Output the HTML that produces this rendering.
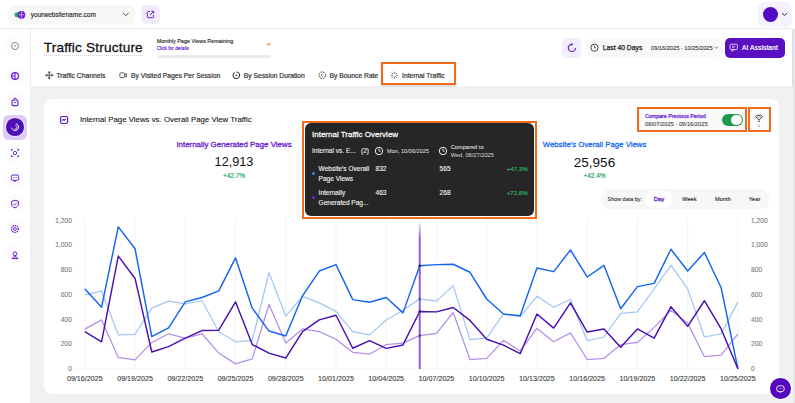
<!DOCTYPE html>
<html><head><meta charset="utf-8">
<style>
*{margin:0;padding:0;box-sizing:border-box}
html,body{width:795px;height:403px;overflow:hidden;background:#fff;font-family:"Liberation Sans",sans-serif;color:#1d1d1f}
.a{position:absolute}
.t{position:absolute;white-space:nowrap;line-height:1}
svg{position:absolute;overflow:visible}
</style></head><body>
<!-- top bar -->
<div class="a" style="left:0;top:28;"></div>
<div class="a" style="left:0;top:28.4px;width:792px;height:1px;background:#ebebeb"></div>
<div class="a" style="left:8px;top:5px;width:127px;height:20px;background:#f7f7f7;border-radius:6px"></div>
<svg style="left:0;top:0" width="40" height="30"><circle cx="17" cy="14.8" r="2.5" fill="#27b35a"/><circle cx="21.4" cy="14.8" r="3.9" fill="#6a1fd0"/><path d="M21.4 11.5v6.6M18.6 14.8h5.6" stroke="#fff" stroke-width="0.55"/></svg>
<div class="t" style="left:30.8px;top:12px;font-size:6.5px;color:#222;-webkit-text-stroke:0.12px #222">yourwebsitename.com</div>
<svg style="left:122px;top:12px" width="8" height="5"><path d="M1 1l2.8 2.6L6.6 1" fill="none" stroke="#444" stroke-width="0.9"/></svg>
<div class="a" style="left:140.5px;top:5px;width:19px;height:19px;background:#f2ecfc;border-radius:5px"></div>
<svg style="left:146px;top:10px" width="9" height="9"><path d="M4 1.5H2.2a.9.9 0 0 0-.9.9v4.4a.9.9 0 0 0 .9.9h4.4a.9.9 0 0 0 .9-.9V5" fill="none" stroke="#6a1fd0" stroke-width="1"/><path d="M4 5L7.6 1.4M5.4 1.2h2.4v2.4" fill="none" stroke="#6a1fd0" stroke-width="1"/></svg>
<div class="a" style="left:758px;top:2px;width:34px;height:25px;background:#f6f2fd;border-radius:6px"></div>
<div class="a" style="left:762.6px;top:6.7px;width:15.4px;height:15.4px;border-radius:50%;background:#540bc2"></div>
<svg style="left:781px;top:12px" width="8" height="5"><path d="M1 1l2.6 2.4L6.2 1" fill="none" stroke="#333" stroke-width="1"/></svg>
<!-- right strip -->
<div class="a" style="left:792px;top:29px;width:3px;height:374px;background:#e6e6e6;border-left:1px solid #dcdcdc"></div>
<!-- sidebar -->
<div class="a" style="left:29.6px;top:29px;width:1px;height:374px;background:#ededed"></div>
<div class="a" style="left:30.6px;top:86.2px;width:762px;height:317px;background:#f1f1f1"></div>
<div class="a" style="left:5.2px;top:36.7px;width:19.4px;height:19.4px;border-radius:50%;background:#fcfcfc"></div>
<div class="a" style="left:5.2px;top:66.4px;width:19.4px;height:19.4px;border-radius:50%;background:#fcfcfc"></div>
<div class="a" style="left:5.2px;top:92.2px;width:19.4px;height:19.4px;border-radius:50%;background:#fcfcfc"></div>
<div class="a" style="left:3.1px;top:114.6px;width:24px;height:25px;border-radius:6px;background:#dccbf6"></div>
<div class="a" style="left:5.2px;top:117.2px;width:19.8px;height:19.8px;border-radius:50%;background:#eee5fb"></div>
<div class="a" style="left:6.3px;top:118.3px;width:17.6px;height:17.6px;border-radius:50%;background:#5010b8"></div>
<svg style="left:9.6px;top:121.6px" width="11" height="11"><path d="M6.2 1.8c1.6.5 2.6 2 2.4 3.7-.3 2-2.2 3.3-4.1 3-1.4-.2-2.4-1.2-2.7-2.4M5.8 3.6c.9.3 1.4 1.2 1.2 2.1-.2 1-1.2 1.6-2.2 1.4" fill="none" stroke="#fff" stroke-width="0.95" stroke-linecap="round"/></svg>
<div class="a" style="left:5.2px;top:143.3px;width:19.4px;height:19.4px;border-radius:50%;background:#fcfcfc"></div>
<div class="a" style="left:5.2px;top:168.3px;width:19.4px;height:19.4px;border-radius:50%;background:#fcfcfc"></div>
<div class="a" style="left:5.2px;top:193.8px;width:19.4px;height:19.4px;border-radius:50%;background:#fcfcfc"></div>
<div class="a" style="left:5.2px;top:219.3px;width:19.4px;height:19.4px;border-radius:50%;background:#fcfcfc"></div>
<div class="a" style="left:5.2px;top:244.8px;width:19.4px;height:19.4px;border-radius:50%;background:#fcfcfc"></div>
<svg style="left:9.9px;top:41.4px" width="10" height="10"><circle cx="5" cy="5" r="3.5" fill="none" stroke="#8a8a8a" stroke-width="1"/><path d="M4.6 3.8l1.4 1.2-1.4 1.2z" fill="#777"/></svg>
<svg style="left:9.9px;top:71.1px" width="10" height="10"><circle cx="5" cy="5" r="3.4" fill="none" stroke="#6a1fd0" stroke-width="1.25"/><path d="M5 1.6v6.8M1.6 5H5" stroke="#6a1fd0" stroke-width="1.1"/></svg>
<svg style="left:9.9px;top:96.9px" width="10" height="10"><rect x="2" y="3" width="6" height="5.6" rx="1.3" fill="none" stroke="#6a1fd0" stroke-width="1.1"/><path d="M3.6 3V2.5a1.4 1.4 0 0 1 2.8 0V3M3.5 5l1.5 1 1.5-1" fill="none" stroke="#6a1fd0" stroke-width="0.9"/></svg>
<svg style="left:9.9px;top:148.0px" width="10" height="10"><path d="M1.4 3V1.4H3M7 1.4h1.6V3M8.6 7v1.6H7M3 8.6H1.4V7" fill="none" stroke="#6a1fd0" stroke-width="0.9"/><circle cx="5" cy="5" r="1.7" fill="none" stroke="#6a1fd0" stroke-width="0.9"/></svg>
<svg style="left:9.9px;top:173.0px" width="10" height="10"><rect x="1.3" y="2" width="7.4" height="5.4" rx="1.6" fill="none" stroke="#6a1fd0" stroke-width="1"/><path d="M4.2 7.4l.8 1.4.8-1.4" fill="none" stroke="#6a1fd0" stroke-width="0.9"/><path d="M3.4 4.7h.01M5 4.7h.01M6.6 4.7h.01" stroke="#6a1fd0" stroke-width="0.9" stroke-linecap="round"/></svg>
<svg style="left:9.9px;top:198.5px" width="10" height="10"><path d="M5 1.2l3.4 1.3v2.4c0 2-1.6 3.4-3.4 4-1.8-.6-3.4-2-3.4-4V2.5z" fill="none" stroke="#6a1fd0" stroke-width="1"/><path d="M3.5 5l1.1 1.1 2-2" fill="none" stroke="#6a1fd0" stroke-width="0.9"/></svg>
<svg style="left:9.9px;top:224.0px" width="10" height="10"><circle cx="5" cy="5" r="3.4" fill="none" stroke="#6a1fd0" stroke-width="1.3" stroke-dasharray="1.4 .8"/><circle cx="5" cy="5" r="1.4" fill="none" stroke="#6a1fd0" stroke-width="0.9"/></svg>
<svg style="left:9.9px;top:249.5px" width="10" height="10"><circle cx="5" cy="3.8" r="1.9" fill="none" stroke="#6a1fd0" stroke-width="1"/><path d="M5 5.7v1M2 8.6c.6-1.2 1.7-1.8 3-1.8s2.4.6 3 1.8z" fill="none" stroke="#6a1fd0" stroke-width="1"/></svg>
<!-- header -->
<div class="t" style="left:43.7px;top:41.2px;font-size:13.6px;letter-spacing:0.19px;color:#111;-webkit-text-stroke:0.28px #111">Traffic Structure</div>
<div class="a" style="left:43.5px;top:55.2px;width:99px;height:0;border-top:0.8px dotted #cfcfcf"></div>

<div class="t" style="left:156.7px;top:39.1px;font-size:5.45px;color:#222;-webkit-text-stroke:0.12px #222">Monthly Page Views Remaining</div>
<div class="t" style="left:156.7px;top:46.7px;font-size:4.75px;color:#6a1fd0;-webkit-text-stroke:0.15px #6a1fd0">Click for details</div>
<div class="t" style="left:266.4px;top:41.2px;font-size:6px;font-weight:bold;color:#f07a2a">∞</div>
<div class="a" style="left:157px;top:55px;width:114px;height:3px;background:#ebebeb;border-radius:2px"></div>
<!-- right header -->
<div class="a" style="left:562.4px;top:38px;width:19px;height:19.7px;background:#f3eefc;border-radius:5px"></div>
<svg style="left:566px;top:42px" width="12" height="12"><path d="M5.9 2.3A3.6 3.6 0 1 0 9.5 5.9" fill="none" stroke="#6a1fd0" stroke-width="1.2"/><path d="M5.4 0.9L7.3 2.3 5.4 3.7z" fill="#6a1fd0"/></svg>
<div class="a" style="left:587px;top:38px;width:135px;height:19px;background:#f8f8f8;border-radius:5px"></div>
<svg style="left:589px;top:42px" width="11" height="11"><circle cx="5.5" cy="5.7" r="3.6" fill="none" stroke="#333" stroke-width="0.9"/><path d="M5.5 3.8v2h1.5" fill="none" stroke="#333" stroke-width="0.8"/></svg>
<div class="t" style="left:602.7px;top:45.2px;font-size:6.8px;color:#222;-webkit-text-stroke:0.25px #222">Last 40 Days</div>
<div class="t" style="left:651px;top:45.8px;font-size:5.66px;color:#333;-webkit-text-stroke:0.1px #333">09/16/2025 - 10/25/2025</div>
<svg style="left:714px;top:46px" width="5" height="4"><path d="M.6 .8l1.7 1.6L4 .8" fill="none" stroke="#555" stroke-width="0.7"/></svg>
<div class="a" style="left:725px;top:38px;width:60px;height:20px;background:#5a0fc0;border-radius:5px"></div>
<svg style="left:729px;top:43px" width="10" height="10"><rect x="1" y="1.2" width="7.4" height="5.4" rx="1.2" fill="none" stroke="#e6dcfb" stroke-width="0.9"/><path d="M3 3.3h3.4M3 4.7h2.4" stroke="#e6dcfb" stroke-width="0.7"/><path d="M3.4 6.6l-.4 2 2-2" fill="none" stroke="#e6dcfb" stroke-width="0.8"/></svg>
<div class="t" style="left:742px;top:45.3px;font-size:6.6px;letter-spacing:0.12px;color:#fff;-webkit-text-stroke:0.2px #fff">AI Assistant</div>
<!-- tabs -->
<svg style="left:44.5px;top:71.2px" width="8.5" height="8.5" viewBox="0 0 10 10"><path d="M5 1v8M1 5h8" stroke="#3a3a3a" stroke-width="0.9"/><circle cx="5" cy="1.8" r="1.1" fill="none" stroke="#3a3a3a" stroke-width="0.8"/><circle cx="5" cy="8.2" r="1.1" fill="none" stroke="#3a3a3a" stroke-width="0.8"/><circle cx="1.8" cy="5" r="1.1" fill="none" stroke="#3a3a3a" stroke-width="0.8"/><circle cx="8.2" cy="5" r="1.1" fill="none" stroke="#3a3a3a" stroke-width="0.8"/></svg>
<div class="t" style="left:56.5px;top:72.8px;font-size:6.75px;color:#333;-webkit-text-stroke:0.2px #333">Traffic Channels</div>
<svg style="left:118.8px;top:71.2px" width="8.5" height="8.5" viewBox="0 0 10 10"><rect x="1" y="2.2" width="5.6" height="5.6" rx="1" fill="none" stroke="#3a3a3a" stroke-width="0.9"/><path d="M6.6 4.2l2.2-1.2v4L6.6 5.8" fill="none" stroke="#3a3a3a" stroke-width="0.9"/></svg>
<div class="t" style="left:131px;top:72.8px;font-size:6.75px;color:#333;-webkit-text-stroke:0.2px #333">By Visited Pages Per Session</div>
<svg style="left:232.1px;top:71.2px" width="8.5" height="8.5" viewBox="0 0 10 10"><path d="M3.2 1.6A3.9 3.9 0 1 0 5 1.1" fill="none" stroke="#3a3a3a" stroke-width="1.25"/><path d="M4.2 3.4l2.2 1.6-2.2 1.6z" fill="#3a3a3a"/></svg>
<div class="t" style="left:243.7px;top:72.8px;font-size:6.75px;color:#333;-webkit-text-stroke:0.2px #333">By Session Duration</div>
<svg style="left:317.8px;top:71.2px" width="8.5" height="8.5" viewBox="0 0 10 10"><circle cx="5" cy="5" r="3.9" fill="none" stroke="#3a3a3a" stroke-width="1.1" stroke-dasharray="2.2 1"/><path d="M5.6 3.2L3.8 5l1.8 1.8" fill="none" stroke="#3a3a3a" stroke-width="1"/></svg>
<div class="t" style="left:329.5px;top:72.8px;font-size:6.75px;color:#333;-webkit-text-stroke:0.2px #333">By Bounce Rate</div>
<svg style="left:389.8px;top:71.2px" width="8.5" height="8.5" viewBox="0 0 10 10"><path d="M5 .8v2.4M5 6.8v2.4M.8 5h2.4M6.8 5h2.4M2 2l1.7 1.7M6.3 6.3L8 8M8 2L6.3 3.7M3.7 6.3L2 8" stroke="#444" stroke-width="0.9"/></svg>
<div class="t" style="left:402px;top:72.8px;font-size:6.75px;color:#333;-webkit-text-stroke:0.2px #333">Internal Traffic</div>
<div class="a" style="left:381.2px;top:62.2px;width:74.6px;height:22.6px;border:2.5px solid #f26a1b;box-shadow:0 1px 1.5px rgba(0,0,0,.2)"></div>
<!-- card -->
<div class="a" style="left:43.6px;top:99.4px;width:735px;height:294.6px;background:#fff;border-radius:8px"></div>
<div class="a" style="left:54.5px;top:110.5px;width:19px;height:19px;border-radius:50%;background:#fafafa"></div>
<svg style="left:58px;top:114px" width="12" height="14"><rect x="2.6" y="2.5" width="7" height="7" rx="1.5" fill="none" stroke="#5a14c8" stroke-width="1.15"/><path d="M4 6.6l1.3-1.2 1 .9 1.6-1.5" fill="none" stroke="#5a14c8" stroke-width="1.05"/><path d="M5.2 11.4l.9.7.9-.7" fill="none" stroke="#aaa" stroke-width="0.6"/></svg>
<div class="t" style="left:79.9px;top:115.9px;font-size:7.85px;color:#222;-webkit-text-stroke:0.12px #222">Internal Page Views vs. Overall Page View Traffic</div>
<div class="a" style="left:79.9px;top:123.6px;width:172px;height:0;border-top:0.7px dotted #dedede"></div>
<!-- KPIs -->
<div class="t" style="left:134px;width:200px;text-align:center;top:141.3px;font-size:7.9px;color:#6a1fd0;-webkit-text-stroke:0.3px #6a1fd0">Internally Generated Page Views</div>
<div class="t" style="left:134px;width:200px;text-align:center;top:156.4px;font-size:12.7px;color:#111">12,913</div>
<div class="t" style="left:134px;width:200px;text-align:center;top:172.9px;font-size:6.5px;color:#22a35a;-webkit-text-stroke:0.15px #22a35a">+42.7%</div>
<div class="t" style="left:494.5px;width:200px;text-align:center;top:141.3px;font-size:7.82px;color:#1f6ff0;-webkit-text-stroke:0.3px #1f6ff0">Website's Overall Page Views</div>
<div class="t" style="left:494.5px;width:200px;text-align:center;top:156.2px;font-size:13.5px;color:#111">25,956</div>
<div class="t" style="left:494.5px;width:200px;text-align:center;top:172.9px;font-size:6.5px;color:#22a35a;-webkit-text-stroke:0.15px #22a35a">+42.4%</div>
<!-- compare -->
<div class="a" style="left:637.2px;top:107.2px;width:109.8px;height:24.9px;border:2.5px solid #f26a1b;background:#f9f9f9"></div>
<div class="t" style="left:645px;top:113.9px;font-size:5.3px;-webkit-text-stroke:0.25px #6a1fd0;color:#6a1fd0">Compare Previous Period</div>
<div class="t" style="left:645px;top:121.9px;font-size:5.75px;color:#444;-webkit-text-stroke:0.1px #444">08/07/2025 - 09/16/2025</div>
<div class="a" style="left:721.6px;top:113.9px;width:21px;height:12.6px;border-radius:7px;background:#1e9a4c"></div>
<div class="a" style="left:731.2px;top:114.9px;width:10.6px;height:10.6px;border-radius:50%;background:#fff"></div>
<div class="a" style="left:748.3px;top:107.2px;width:22.5px;height:24.9px;border:2.5px solid #f26a1b;background:#fcfcfc"></div>
<svg style="left:752px;top:112.3px" width="14" height="18"><path d="M3.6 4.6C3.6 3.5 4.6 3.3 7 3.3S10.4 3.5 10.4 4.6L7.8 7.4H6.2Z" fill="none" stroke="#333" stroke-width="0.9" stroke-linejoin="round"/><path d="M5 5h4" stroke="#555" stroke-width="0.6"/><circle cx="7" cy="9.3" r="0.8" fill="#222"/><path d="M5.7 13.4l1.3 1 1.3-1" fill="none" stroke="#666" stroke-width="0.7"/></svg>
<!-- show data by -->
<div class="a" style="left:601.3px;top:189px;width:167.6px;height:19.8px;background:#f7f7f7;border-radius:8px"></div>
<div class="a" style="left:646px;top:190.5px;width:26px;height:17px;background:#fff;border-radius:7px"></div>
<div class="t" style="left:607.5px;top:197.1px;font-size:5.45px;color:#333;-webkit-text-stroke:0.1px #333">Show data by:</div>
<div class="t" style="left:639px;width:40px;text-align:center;top:197.1px;font-size:5.9px;color:#6a1fd0;-webkit-text-stroke:0.3px #6a1fd0">Day</div>
<div class="t" style="left:669.4px;width:40px;text-align:center;top:197.1px;font-size:5.7px;color:#333;-webkit-text-stroke:0.15px #333">Week</div>
<div class="t" style="left:702.9px;width:40px;text-align:center;top:197.1px;font-size:5.7px;color:#333;-webkit-text-stroke:0.15px #333">Month</div>
<div class="t" style="left:734.6px;width:40px;text-align:center;top:197.1px;font-size:5.7px;color:#333;-webkit-text-stroke:0.15px #333">Year</div>
<!-- chart -->
<svg style="left:0;top:0" width="795" height="403">
<g stroke="#ececec" stroke-width="0.7"><line x1="84.80" y1="218.5" x2="84.80" y2="369" /><line x1="135.04" y1="218.5" x2="135.04" y2="369" /><line x1="185.28" y1="218.5" x2="185.28" y2="369" /><line x1="235.52" y1="218.5" x2="235.52" y2="369" /><line x1="285.75" y1="218.5" x2="285.75" y2="369" /><line x1="335.99" y1="218.5" x2="335.99" y2="369" /><line x1="386.23" y1="218.5" x2="386.23" y2="369" /><line x1="436.47" y1="218.5" x2="436.47" y2="369" /><line x1="486.71" y1="218.5" x2="486.71" y2="369" /><line x1="536.95" y1="218.5" x2="536.95" y2="369" /><line x1="587.18" y1="218.5" x2="587.18" y2="369" /><line x1="637.42" y1="218.5" x2="637.42" y2="369" /><line x1="687.66" y1="218.5" x2="687.66" y2="369" /><line x1="737.90" y1="218.5" x2="737.90" y2="369" /></g>
<line x1="76" y1="368.8" x2="740" y2="368.8" stroke="#eeeeee" stroke-width="0.6"/>
<g font-family="Liberation Sans" font-size="6.7" fill="#7a7a7a" stroke="#7a7a7a" stroke-width="0.08" text-anchor="end"><text x="72" y="222.60">1,200</text><text x="72" y="247.35">1,000</text><text x="72" y="272.10">800</text><text x="72" y="296.85">600</text><text x="72" y="321.60">400</text><text x="72" y="346.35">200</text><text x="72" y="371.10">0</text></g>
<g font-family="Liberation Sans" font-size="6.7" fill="#7a7a7a" stroke="#7a7a7a" stroke-width="0.08" text-anchor="start"><text x="751" y="222.60">1,200</text><text x="751" y="247.35">1,000</text><text x="751" y="272.10">800</text><text x="751" y="296.85">600</text><text x="751" y="321.60">400</text><text x="751" y="346.35">200</text><text x="751" y="371.10">0</text></g>
<g font-family="Liberation Sans" font-size="7.15" fill="#3a3a3a" stroke="#3a3a3a" stroke-width="0.1" text-anchor="middle"><text x="84.80" y="380.5">09/16/2025</text><text x="135.04" y="380.5">09/19/2025</text><text x="185.28" y="380.5">09/22/2025</text><text x="235.52" y="380.5">09/25/2025</text><text x="285.75" y="380.5">09/28/2025</text><text x="335.99" y="380.5">10/01/2025</text><text x="386.23" y="380.5">10/04/2025</text><text x="436.47" y="380.5">10/07/2025</text><text x="486.71" y="380.5">10/10/2025</text><text x="536.95" y="380.5">10/13/2025</text><text x="587.18" y="380.5">10/16/2025</text><text x="637.42" y="380.5">10/19/2025</text><text x="687.66" y="380.5">10/22/2025</text><text x="737.90" y="380.5">10/25/2025</text></g>
<polyline points="84.80,329.08 101.55,319.92 118.29,357.42 135.04,359.89 151.78,342.44 168.53,333.78 185.28,338.11 202.02,333.78 218.77,353.08 235.52,363.85 252.26,358.90 269.01,304.45 285.75,343.06 302.50,328.95 319.25,331.68 335.99,339.22 352.74,352.34 369.48,354.20 386.23,344.55 402.98,343.06 419.72,335.63 436.47,333.41 453.22,312.49 469.96,359.52 486.71,358.41 503.45,340.34 520.20,350.98 536.95,328.46 553.69,341.82 570.44,332.91 587.18,359.52 603.93,358.41 620.68,344.55 637.42,342.44 654.17,327.34 670.92,310.27 687.66,323.14 704.41,356.67 721.15,355.19 737.90,333.78" fill="none" stroke="#b48fe8" stroke-width="1.25" stroke-linejoin="round"/>
<polyline points="84.80,294.92 101.55,291.09 118.29,334.89 135.04,334.27 151.78,308.16 168.53,301.11 185.28,303.96 202.02,300.74 218.77,331.68 235.52,341.82 252.26,340.34 269.01,272.77 285.75,316.08 302.50,296.41 319.25,302.84 335.99,311.38 352.74,331.68 369.48,334.89 386.23,319.92 402.98,310.27 419.72,298.88 436.47,301.11 453.22,285.64 469.96,339.60 486.71,338.11 503.45,313.98 520.20,316.70 536.95,296.28 553.69,307.17 570.44,299.50 587.18,340.71 603.93,337.00 620.68,313.48 637.42,311.88 654.17,288.86 670.92,265.35 687.66,288.86 704.41,337.00 721.15,333.78 737.90,301.85" fill="none" stroke="#a2c7f7" stroke-width="1.25" stroke-linejoin="round"/>
<polyline points="84.80,288.86 101.55,307.17 118.29,226.86 135.04,248.76 151.78,336.62 168.53,327.96 185.28,301.85 202.02,297.52 218.77,290.84 235.52,257.80 252.26,308.16 269.01,331.06 285.75,336.01 302.50,295.79 319.25,271.04 335.99,264.60 352.74,299.62 369.48,302.22 386.23,297.52 402.98,312.87 419.72,265.84 436.47,264.60 453.22,264.23 469.96,272.27 486.71,299.00 503.45,313.98 520.20,315.71 536.95,267.94 553.69,271.66 570.44,250.00 587.18,276.98 603.93,265.35 620.68,308.78 637.42,286.63 654.17,283.41 670.92,249.26 687.66,271.04 704.41,252.48 721.15,287.74 737.90,368.80" fill="none" stroke="#1565f0" stroke-width="1.45" stroke-linejoin="round"/>
<polyline points="84.80,331.68 101.55,341.82 118.29,256.06 135.04,278.46 151.78,351.97 168.53,346.65 185.28,338.11 202.02,330.56 218.77,330.19 235.52,301.85 252.26,344.55 269.01,353.08 285.75,358.03 302.50,331.68 319.25,319.92 335.99,315.22 352.74,348.26 369.48,340.71 386.23,348.38 402.98,344.92 419.72,311.50 436.47,311.88 453.22,307.54 469.96,320.41 486.71,339.22 503.45,345.16 520.20,353.70 536.95,313.98 553.69,328.09 570.44,302.84 587.18,332.05 603.93,328.95 620.68,347.14 637.42,328.95 654.17,338.11 670.92,306.68 687.66,326.35 704.41,300.74 721.15,328.95 737.90,368.80" fill="none" stroke="#4a0fb3" stroke-width="1.45" stroke-linejoin="round"/>
<defs><linearGradient id="hg" x1="0" y1="0" x2="0" y2="1"><stop offset="0" stop-color="#8f52d8" stop-opacity="0"/><stop offset="0.12" stop-color="#8f52d8" stop-opacity="1"/><stop offset="1" stop-color="#8f52d8"/></linearGradient></defs><rect x="418.77" y="221" width="1.9" height="148" fill="url(#hg)"/><circle cx="419.72" cy="265.84" r="1.3" fill="#0a2a80"/><circle cx="419.72" cy="311.50" r="1.3" fill="#2a0a70"/><circle cx="419.72" cy="298.88" r="1.3" fill="#4a6aa0"/><circle cx="419.72" cy="335.63" r="1.3" fill="#5a3a90"/>
</svg>
<!-- tooltip -->
<div class="a" style="left:301.8px;top:120.8px;width:234.9px;height:97.9px;border:2.5px solid #f26a1b;background:#fff"></div>
<div class="a" style="left:304.5px;top:123px;width:229.5px;height:93px;background:#262626;border-radius:6px"></div>
<div class="t" style="left:312px;top:131.3px;font-size:8px;color:#f2f2f2;-webkit-text-stroke:0.3px #f2f2f2">Internal Traffic Overview</div>
<div class="t" style="left:312px;top:148.4px;font-size:6.6px;color:#eee;-webkit-text-stroke:0.1px #eee">Internal vs. E...</div>
<div class="t" style="left:361px;top:148.4px;font-size:6.6px;color:#eee;-webkit-text-stroke:0.1px #eee">(2)</div>
<svg style="left:374.1px;top:145.7px" width="10" height="10"><circle cx="5" cy="5" r="3.7" fill="none" stroke="#eee" stroke-width="1"/><path d="M5 2.7V5.1h1.7" fill="none" stroke="#eee" stroke-width="0.9"/></svg>
<div class="t" style="left:387px;top:148.9px;font-size:5.6px;color:#d6d6d6;-webkit-text-stroke:0.08px #d6d6d6">Mon, 10/06/2025</div>
<svg style="left:437.8px;top:146.2px" width="10" height="10"><circle cx="5" cy="5" r="3.7" fill="none" stroke="#eee" stroke-width="1"/><path d="M5 2.7V5.1h1.7" fill="none" stroke="#eee" stroke-width="0.9"/></svg>
<div class="t" style="left:450.7px;top:145.2px;font-size:5.7px;color:#ddd;-webkit-text-stroke:0.1px #ddd">Compared to</div>
<div class="t" style="left:450.7px;top:152.8px;font-size:5.7px;color:#ddd">Wed, 08/27/2025</div>
<div class="a" style="left:312.3px;top:172px;width:2.6px;height:2.6px;border-radius:50%;background:#2e7ff5"></div>
<div class="t" style="left:318.6px;top:166px;font-size:6.55px;-webkit-text-stroke:0.12px currentColor;color:#f2f2f2">Website's Overall</div>
<div class="t" style="left:318.6px;top:176px;font-size:6.55px;-webkit-text-stroke:0.12px currentColor;color:#f2f2f2">Page Views</div>
<div class="t" style="left:375.5px;top:166px;font-size:6.55px;-webkit-text-stroke:0.12px currentColor;color:#f2f2f2">832</div>
<div class="t" style="left:439.6px;top:166px;font-size:6.55px;-webkit-text-stroke:0.12px currentColor;color:#f2f2f2">565</div>
<div class="t" style="left:467.7px;width:60px;text-align:right;top:166px;font-size:6.15px;-webkit-text-stroke:0.18px currentColor;color:#2bb062">+47.3%</div>
<div class="a" style="left:312.3px;top:196.4px;width:2.6px;height:2.6px;border-radius:50%;background:#6a1fe0"></div>
<div class="t" style="left:318.6px;top:190px;font-size:6.55px;-webkit-text-stroke:0.12px currentColor;color:#f2f2f2">Internally</div>
<div class="t" style="left:318.6px;top:200px;font-size:6.55px;-webkit-text-stroke:0.12px currentColor;color:#f2f2f2">Generated Pag...</div>
<div class="t" style="left:375.5px;top:190px;font-size:6.55px;-webkit-text-stroke:0.12px currentColor;color:#f2f2f2">463</div>
<div class="t" style="left:439.6px;top:190px;font-size:6.55px;-webkit-text-stroke:0.12px currentColor;color:#f2f2f2">268</div>
<div class="t" style="left:467.7px;width:60px;text-align:right;top:190px;font-size:6.15px;-webkit-text-stroke:0.18px currentColor;color:#2bb062">+72.8%</div>
<!-- chat -->
<div class="a" style="left:769.4px;top:377.4px;width:22.2px;height:22.2px;border-radius:50%;background:#fff"></div><div class="a" style="left:770.3px;top:378.3px;width:20.4px;height:20.4px;border-radius:50%;background:#5509bf"></div>
<svg style="left:774px;top:382.5px" width="13" height="13"><rect x="2.6" y="2.8" width="7.6" height="5.8" rx="2.4" fill="none" stroke="#fff" stroke-width="0.85"/><path d="M5.8 8.6l.6 1.3.6-1.3" fill="none" stroke="#fff" stroke-width="0.75"/><path d="M4.9 5.7h.01M6.4 5.7h.01M7.9 5.7h.01" stroke="#e8dcff" stroke-width="0.8" stroke-linecap="round"/></svg>
</body></html>
